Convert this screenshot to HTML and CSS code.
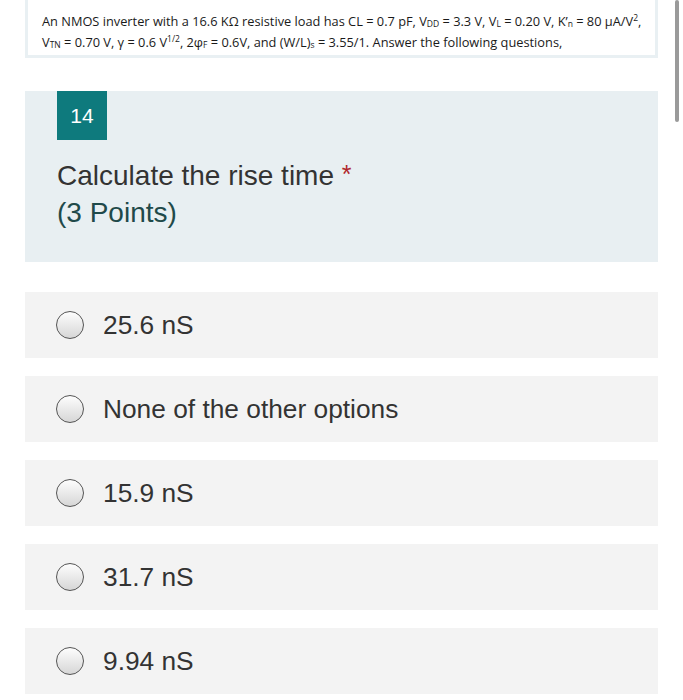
FILE: index.html
```html
<!DOCTYPE html>
<html>
<head>
<meta charset="utf-8">
<link rel="stylesheet" href="styles.css">
</head>
<body>
<div class="scrollbar"></div>
<div class="page">
  <div class="intro">
    <p class="line">An NMOS inverter with a 16.6 KΩ resistive load has CL = 0.7 pF, V<sub>DD</sub> = 3.3 V, V<sub>L</sub> = 0.20 V, K’<sub>n</sub> = 80 μA/V<sup>2</sup>,</p>
    <p class="line">V<sub>TN</sub> = 0.70 V, γ = 0.6 V<sup>1/2</sup>, 2φ<sub>F</sub> = 0.6V, and (W/L)<sub>s</sub> = 3.55/1. Answer the following questions,</p>
  </div>
  <div class="question">
    <div class="badge">14</div>
    <div class="qtext">Calculate the rise time <span class="req">*</span></div>
    <div class="points">(3 Points)</div>
  </div>
  <div class="options">
    <div class="option"><span class="radio"></span><span class="label">25.6 nS</span></div>
    <div class="option"><span class="radio"></span><span class="label">None of the other options</span></div>
    <div class="option"><span class="radio"></span><span class="label">15.9 nS</span></div>
    <div class="option"><span class="radio"></span><span class="label">31.7 nS</span></div>
    <div class="option"><span class="radio"></span><span class="label">9.94 nS</span></div>
  </div>
</div>
</body>
</html>
```
FILE: styles.css
```css
html, body {
  margin: 0;
  padding: 0;
  background: #ffffff;
}
body {
  font-family: "Liberation Sans", Arial, sans-serif;
  color: #333333;
  overflow: hidden;
}
.scrollbar {
  position: absolute;
  left: 675px;
  top: 0;
  width: 4px;
  height: 122px;
  border-radius: 2px;
  background: #9a9a9a;
}
.page {
  width: 633px;
  margin-left: 25px;
  display: flex;
  flex-direction: column;
}
.intro {
  border: 3px solid #e9f0f3;
  border-top: none;
  padding: 11px 6px 2px 14px;
  font-family: "Open Sans", "Noto Sans", sans-serif;
  font-size: 12.8px;
  letter-spacing: 0;
  color: #1a1a1a;
}
.line {
  margin: 0;
  line-height: 21px;
  white-space: nowrap;
}
.line sub, .line sup {
  font-size: 8.5px;
  line-height: 0;
  letter-spacing: 0;
}
.line sub {
  vertical-align: -1px;
}
.line sup {
  vertical-align: 5px;
}
.question {
  margin-top: 33px;
  background: #e8eff2;
  padding: 0 32px 31px 32px;
  display: flex;
  flex-direction: column;
  align-items: flex-start;
}
.badge {
  width: 50px;
  height: 49px;
  background: #0e7a7d;
  color: #ffffff;
  font-size: 21px;
  display: flex;
  align-items: center;
  justify-content: center;
  margin-bottom: 17px;
}
.qtext, .points {
  font-size: 28px;
  line-height: 37px;
}
.qtext {
  color: #333333;
}
.req {
  color: #b0262c;
  font-size: 25px;
  vertical-align: top;
  position: relative;
  top: -1px;
}
.points {
  color: #1f4a4a;
}
.options {
  margin-top: 30px;
  display: flex;
  flex-direction: column;
  gap: 18px;
}
.option {
  height: 66px;
  background: #f3f3f3;
  display: flex;
  align-items: center;
  padding-left: 31px;
}
.radio {
  width: 28px;
  height: 28px;
  border: 1.5px solid #555555;
  border-radius: 50%;
  background: linear-gradient(#fdfdfd, #d6d6d6);
  box-sizing: border-box;
  margin-right: 19px;
  flex: none;
}
.label {
  font-size: 26.3px;
  color: #333333;
}
```
